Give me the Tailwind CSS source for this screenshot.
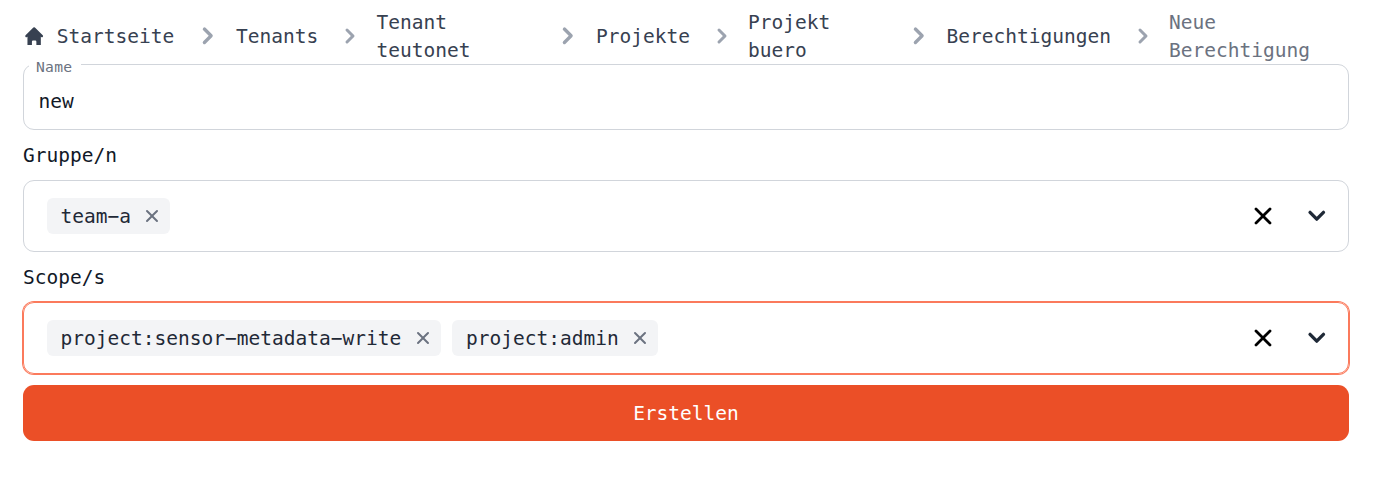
<!DOCTYPE html>
<html lang="de"><head><meta charset="utf-8"><title>Neue Berechtigung</title>
<script src="https://cdn.jsdelivr.net/npm/@tailwindcss/browser@4"></script></head>
<body class="h-[480px] overflow-hidden bg-white px-[23px] pt-2 font-['DejaVu_Sans_Mono',monospace] text-[19.53px] leading-7 text-[#111827]">
<svg class="hidden">
<symbol id="chev" viewBox="0 0 20 20"><path fill="currentColor" fill-rule="evenodd" d="M7.293 14.707a1 1 0 010-1.414L10.586 10 7.293 6.707a1 1 0 011.414-1.414l4 4a1 1 0 010 1.414l-4 4a1 1 0 01-1.414 0z"/></symbol>
<symbol id="x" viewBox="0 0 20 20"><path fill="currentColor" fill-rule="evenodd" d="M4.293 4.293a1 1 0 011.414 0L10 8.586l4.293-4.293a1 1 0 111.414 1.414L11.414 10l4.293 4.293a1 1 0 01-1.414 1.414L10 11.414l-4.293 4.293a1 1 0 01-1.414-1.414L8.586 10 4.293 5.707a1 1 0 010-1.414z"/></symbol>
<symbol id="down" viewBox="0 0 20 20"><path fill="currentColor" fill-rule="evenodd" d="M5.293 7.293a1 1 0 011.414 0L10 10.586l3.293-3.293a1 1 0 111.414 1.414l-4 4a1 1 0 01-1.414 0l-4-4a1 1 0 010-1.414z"/></symbol>
</svg>
<nav><ol class="flex h-14 items-center text-[#374151]">
<li class="flex w-[167.5px] shrink-0 items-center"><svg class="mr-[11.5px] size-[22.3px] shrink-0" viewBox="0 0 20 20"><path fill="currentColor" d="M10.707 2.293a1 1 0 00-1.414 0l-7 7a1 1 0 001.414 1.414L4 10.414V18h4v-3a1 1 0 011-1h2a1 1 0 011 1v3h4v-7.586l.293.293a1 1 0 001.414-1.414l-7-7z"/></svg><span class="pt-0.5">Startseite</span></li>
<li class="flex w-[144px] shrink-0 items-center"><svg class="mr-[12px] size-[33.5px] shrink-0 text-[#9ca3af]"><use href="#chev"/></svg><span class="pt-0.5">Tenants</span></li>
<li class="flex w-[216.5px] shrink-0 items-center"><svg class="mr-[12px] size-[30px] shrink-0 text-[#9ca3af]"><use href="#chev"/></svg><span class="pt-0.5">Tenant<br>teutonet</span></li>
<li class="flex w-[156px] shrink-0 items-center"><svg class="mr-[11.5px] size-[33.5px] shrink-0 text-[#9ca3af]"><use href="#chev"/></svg><span class="pt-0.5">Projekte</span></li>
<li class="flex w-[195px] shrink-0 items-center"><svg class="mr-[11px] size-[30px] shrink-0 text-[#9ca3af]"><use href="#chev"/></svg><span class="pt-0.5">Projekt<br>buero</span></li>
<li class="flex w-[226px] shrink-0 items-center"><svg class="mr-[11px] size-[33.5px] shrink-0 text-[#9ca3af]"><use href="#chev"/></svg><span class="pt-0.5">Berechtigungen</span></li>
<li class="flex shrink-0 items-center"><svg class="mr-[11px] size-[30px] shrink-0 text-[#9ca3af]"><use href="#chev"/></svg><span class="pt-0.5 text-[#6b7280]">Neue<br>Berechtigung</span></li>
</ol></nav>
<main class="w-[1326px]">
<div class="relative h-[66px] rounded-[11px] border border-[#d1d5db] px-[14.5px] pt-[23px]">new
<label class="absolute left-[5px] -top-[9px] w-[52px] bg-white pl-[7px] text-[14.65px] leading-[22px] tracking-[0.3px] text-[#6b7280]">Name</label></div>
<div class="mt-[11px] h-7 pt-px">Gruppe/n</div>
<div class="mt-[11px] flex h-[72px] items-center rounded-[11px] border border-[#d1d5db] pl-[23px] pr-[14.5px]">
<div class="flex h-9 w-[123px] items-center rounded-md bg-[#f3f4f6] pl-[13.5px] text-[#1f2937]"><span class="pt-0.5">team−a</span><svg class="ml-[11px] size-[20px] shrink-0 text-[#6b7280]"><use href="#x"/></svg></div>
<svg class="ml-auto size-[28px] text-black"><use href="#x"/></svg><svg class="ml-[23px] size-[33.5px] text-[#1f2937]"><use href="#down"/></svg></div>
<div class="mt-[11px] h-7 pt-px">Scope/s</div>
<div class="mt-[11px] flex h-[72px] items-center rounded-[11px] border border-[#fb7a5c] pl-[23px] pr-[14.5px] ring-1 ring-[#fb7a5c]">
<div class="flex h-9 w-[394px] items-center rounded-md bg-[#f3f4f6] pl-[13.5px] text-[#1f2937]"><span class="pt-0.5">project:sensor−metadata−write</span><svg class="ml-[11.5px] size-[20px] shrink-0 text-[#6b7280]"><use href="#x"/></svg></div>
<div class="ml-[11px] flex h-9 w-[206px] items-center rounded-md bg-[#f3f4f6] pl-3.5 text-[#1f2937]"><span class="pt-0.5">project:admin</span><svg class="ml-[11px] size-[20px] shrink-0 text-[#6b7280]"><use href="#x"/></svg></div>
<svg class="ml-auto size-[28px] text-black"><use href="#x"/></svg><svg class="ml-[23px] size-[33.5px] text-[#1f2937]"><use href="#down"/></svg></div>
<button class="mt-[11px] block h-14 w-full rounded-[11px] bg-[#eb4f27] pt-0.5 text-white">Erstellen</button>
</main></body></html>
